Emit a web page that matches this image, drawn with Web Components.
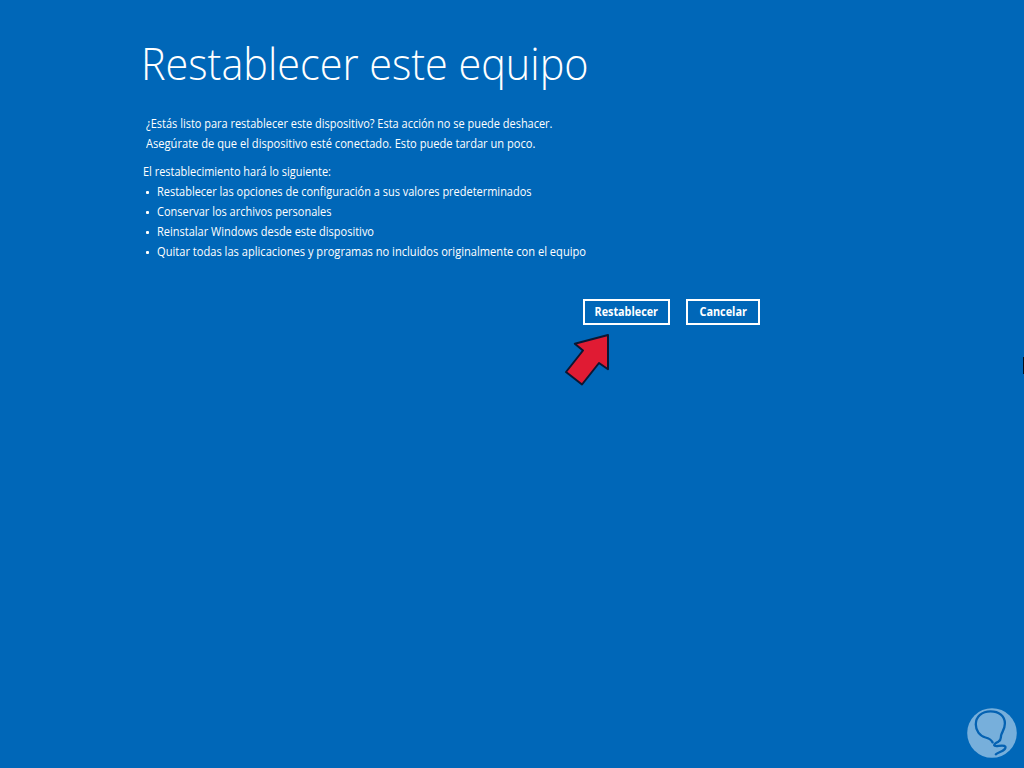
<!DOCTYPE html>
<html lang="es">
<head>
<meta charset="utf-8">
<title>Restablecer este equipo</title>
<style>
    html, body{
        margin: 0;
        height: 100%;
        overflow: hidden;
        background-color: #0067b8;
    }
</style>
</head>
<body>
<reset-screen>
    <text-line slot="title" variant="title" width="447.5">Restablecer este equipo</text-line>
    <text-line slot="intro" width="406.5">¿Estás listo para restablecer este dispositivo? Esta acción no se puede deshacer.</text-line>
    <text-line slot="intro" width="389.5">Asegúrate de que el dispositivo esté conectado. Esto puede tardar un poco.</text-line>
    <text-line slot="lead" width="188">El restablecimiento hará lo siguiente:</text-line>
    <bullet-item slot="list"><text-line width="374.5">Restablecer las opciones de configuración a sus valores predeterminados</text-line></bullet-item>
    <bullet-item slot="list"><text-line width="174.5">Conservar los archivos personales</text-line></bullet-item>
    <bullet-item slot="list"><text-line width="217">Reinstalar Windows desde este dispositivo</text-line></bullet-item>
    <bullet-item slot="list"><text-line width="429">Quitar todas las aplicaciones y programas no incluidos originalmente con el equipo</text-line></bullet-item>
    <action-button slot="actions" style="width:87px"><text-line variant="button" width="63.5">Restablecer</text-line></action-button>
    <action-button slot="actions" style="width:74px"><text-line variant="button" width="47.5">Cancelar</text-line></action-button>
</reset-screen>
<pointer-arrow></pointer-arrow>
<bulb-logo></bulb-logo>
<edge-mark></edge-mark>

<script>
// One line of text, condensed so that it fills its width
class TextLine extends HTMLElement{
    constructor(){
        super();
        this.shadowDOM = this.attachShadow({mode: 'open'});
    }
    connectedCallback(){
        this.render();
        this.fit();
    }
    fit(){
        const text = this.shadowDOM.querySelector('.text');
        const width = parseFloat(this.getAttribute('width'));
        const natural = text.getBoundingClientRect().width;
        text.style.transform = `scaleX(${(width / natural).toFixed(4)})`;
    }
    render(){
        this.shadowDOM.innerHTML=`
        <style>
        :host{
            display: block;
            font: 12px/20px "Open Sans", "Noto Sans", sans-serif;
            color: white;
            white-space: nowrap;
        }
        :host([variant="title"]){
            font-size: 44px;
            line-height: 60px;
            font-weight: 300;
        }
        :host([variant="button"]){
            font-weight: 700;
        }
        .text{
            display: inline-block;
            vertical-align: top;
            transform-origin: left center;
        }
        :host([variant="button"]) .text{
            transform-origin: center;
        }
        </style>
        <span class="text"><slot></slot></span>
        `;
    }
}

class BulletItem extends HTMLElement{
    constructor(){
        super();
        this.shadowDOM = this.attachShadow({mode: 'open'});
    }
    connectedCallback(){
        this.shadowDOM.innerHTML=`
        <style>
        :host{
            display: flex;
            align-items: center;
            gap: 8px;
            padding-left: 3px;
            height: 20px;
        }
        .dot{
            width: 3px;
            height: 3px;
            margin-top: 1px;
            border-radius: 1px;
            background-color: white;
        }
        </style>
        <span class="dot"></span>
        <slot></slot>
        `;
    }
}

class ActionButton extends HTMLElement{
    constructor(){
        super();
        this.shadowDOM = this.attachShadow({mode: 'open'});
    }
    connectedCallback(){
        this.shadowDOM.innerHTML=`
        <style>
        :host{
            display: block;
            height: 26px;
        }
        button{
            display: flex;
            align-items: center;
            justify-content: center;
            box-sizing: border-box;
            width: 100%;
            height: 100%;
            margin: 0;
            padding: 0;
            border: 2px solid white;
            background: none;
        }
        </style>
        <button type="button"><slot></slot></button>
        `;
    }
}

class ResetScreen extends HTMLElement{
    constructor(){
        super();
        this.shadowDOM = this.attachShadow({mode: 'open'});
    }
    connectedCallback(){
        this.shadowDOM.innerHTML=`
        <style>
        :host{
            display: block;
            box-sizing: border-box;
            width: 760px;
            padding: 33px 0 0 143px;
        }
        header{
            margin-left: -2.5px;
        }
        .intro{
            padding: 21px 0 8px 3px;
        }
        .actions{
            display: flex;
            justify-content: flex-end;
            gap: 16px;
            padding-top: 37px;
        }
        </style>
        <header><slot name="title"></slot></header>
        <div class="intro"><slot name="intro"></slot></div>
        <slot name="lead"></slot>
        <div class="list"><slot name="list"></slot></div>
        <div class="actions"><slot name="actions"></slot></div>
        `;
    }
}

class PointerArrow extends HTMLElement{
    constructor(){
        super();
        this.shadowDOM = this.attachShadow({mode: 'open'});
    }
    connectedCallback(){
        this.shadowDOM.innerHTML=`
        <style>
        :host{
            position: absolute;
            left: 560px;
            top: 330px;
        }
        svg{
            display: block;
        }
        </style>
        <svg width="56" height="60" viewBox="0 0 56 60">
            <path d="M48 5 L14.8 13.7 L23 20.5 L6 42 L22 54.5 L39 33 L48 39.2 Z" fill="#e01b33" stroke="#0b1733" stroke-width="2" stroke-linejoin="round"/>
        </svg>
        `;
    }
}

class BulbLogo extends HTMLElement{
    constructor(){
        super();
        this.shadowDOM = this.attachShadow({mode: 'open'});
    }
    connectedCallback(){
        this.shadowDOM.innerHTML=`
        <style>
        :host{
            position: absolute;
            left: 954px;
            top: 698px;
        }
        svg{
            display: block;
        }
        </style>
        <svg width="70" height="70" viewBox="0 0 70 70" fill="none">
            <circle cx="38" cy="35" r="24.8" fill="#77afdb"/>
            <path d="M38.6 44.4 C37 41.5 35 40.3 31.5 39.5 C25.5 38 21.8 32.5 21.8 26.5 C21.8 18.5 28 13.4 36.5 13.4 C45 13.4 50.9 18 50.9 25.5 C50.9 31 48 34 47.2 37 C46.5 40 47.5 42 44.5 43.6 C42 44.8 40 45.8 40.2 47.4 C40.8 49.6 49.5 45.8 51.4 48.6 C52.4 51 48.5 53 45.5 54.3 C43.8 55 42.6 55.6 41.8 56.3" stroke="#0562b2" stroke-width="2.3" stroke-linecap="round" stroke-linejoin="round"/>
        </svg>
        `;
    }
}

// Sliver of a dark shape cut off by the right edge
class EdgeMark extends HTMLElement{
    constructor(){
        super();
        this.shadowDOM = this.attachShadow({mode: 'open'});
    }
    connectedCallback(){
        this.shadowDOM.innerHTML=`
        <style>
        :host{
            position: absolute;
            right: 0;
            top: 357px;
            width: 1px;
            height: 17px;
            background-color: #04101f;
        }
        </style>
        `;
    }
}

customElements.define('text-line', TextLine);
customElements.define('bullet-item', BulletItem);
customElements.define('action-button', ActionButton);
customElements.define('reset-screen', ResetScreen);
customElements.define('pointer-arrow', PointerArrow);
customElements.define('bulb-logo', BulbLogo);
customElements.define('edge-mark', EdgeMark);
</script>
</body>
</html>
